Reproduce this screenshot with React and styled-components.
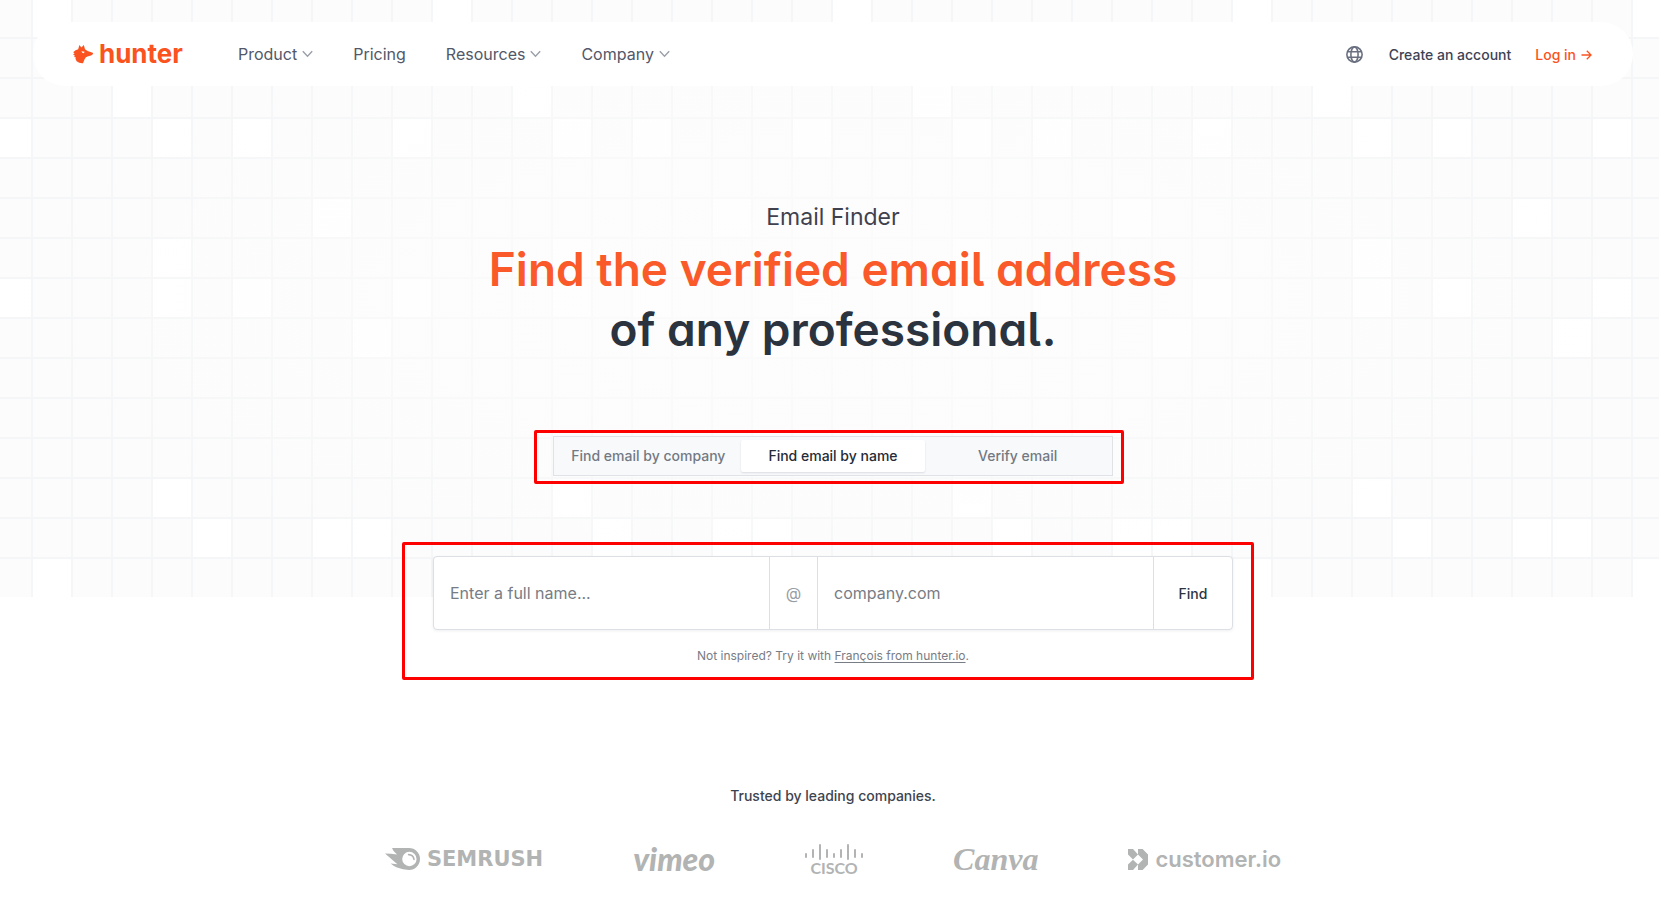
import React from 'react';
import styled, {createGlobalStyle} from 'styled-components';

const navItems = [
  {label: 'Product', menu: true},
  {label: 'Pricing', menu: false},
  {label: 'Resources', menu: true},
  {label: 'Company', menu: true},
];

const tabs = ['Find email by company', 'Find email by name', 'Verify email'];

// white squares of the grid tile, as [column, row]
const lightCells = [
  [2, 1], [3, 2], [5, 2], [9, 2], [7, 4], [3, 5], [3, 6], [5, 6], [9, 6],
  [8, 7], [3, 11], [4, 12], [7, 12], [8, 12], [0, 13],
];

// bars of the bridge, as [x, top, height]
const bridgeBars = [
  [0, 9, 5], [7, 5, 9], [14, 0, 16], [21, 5, 9], [28, 9, 5],
  [35, 5, 9], [42, 0, 16], [49, 5, 9], [56, 9, 5],
];

const GridBackdrop = () => (
  <Backdrop aria-hidden="true">
    <defs>
      <pattern id="grid" x="31" y="37" width="40" height="40" patternUnits="userSpaceOnUse">
        <path d="M0 1H40M1 0V40" stroke="#f5f6f7" strokeWidth="2" />
      </pattern>
      <pattern id="cells" x="31" y="37" width="400" height="560" patternUnits="userSpaceOnUse">
        {lightCells.map(([col, row]) => (
          <rect key={`${col}-${row}`} x={col * 40 + 2} y={row * 40 + 2} width="38" height="38" fill="#fff" />
        ))}
      </pattern>
      <radialGradient id="fade" cx="50%" cy="50%" r="50%">
        <stop offset="0" stopColor="#fdfdfd" stopOpacity="0.8" />
        <stop offset="0.5" stopColor="#fdfdfd" stopOpacity="0.5" />
        <stop offset="1" stopColor="#fdfdfd" stopOpacity="0" />
      </radialGradient>
    </defs>
    <rect width="100%" height="100%" fill="#fcfcfc" />
    <rect width="100%" height="100%" fill="url(#cells)" />
    <rect width="100%" height="100%" fill="url(#grid)" />
    <rect width="100%" height="100%" fill="url(#fade)" />
  </Backdrop>
);

const Chevron = () => (
  <svg width="11" height="8" viewBox="0 0 11 8" fill="none" stroke="#9a9fa8" strokeWidth="1.4" aria-hidden="true">
    <path d="M0.8 1.2L5.5 6.2L10.2 1.2" />
  </svg>
);

const Globe = () => (
  <svg width="17" height="17" viewBox="0 0 16 16" fill="none" stroke="#6b7080" strokeWidth="1.5" aria-hidden="true">
    <circle cx="8" cy="8" r="7.2" />
    <ellipse cx="8" cy="8" rx="3.4" ry="7.2" />
    <path d="M1.2 5.4H14.8M1.2 10.6H14.8" />
  </svg>
);

const Arrow = () => (
  <svg width="11" height="10" viewBox="0 0 11 10" fill="none" stroke="currentColor" strokeWidth="1.3" aria-hidden="true">
    <path d="M0.5 5H10M5.8 0.8L10 5L5.8 9.2" />
  </svg>
);

const Wolf = () => (
  <svg width="20" height="19" viewBox="0 0 20 19" aria-hidden="true">
    <path
      fill="#fa5320"
      d="M6.4 0L8.4 2.4L10.8 0L12 4.3L14.6 6.1L19.6 7.8Q20.3 8.4 19.8 9.2L18 10.6L14.4 11.4Q12.4 12.2 11.6 14.2L10 18.2Q6.6 18.6 3.6 16.2L2.4 13.4L3 12.4L1.2 12L1.8 10.6L0 9.6L1.6 8.6L0.2 7.2Q2.4 4.6 5.2 4.2Z"
    />
    <path fill="#fff" d="M8.4 6.2L11.6 6.8L11 8.1Q9.2 8.4 8.4 6.2Z" />
  </svg>
);

const Fireball = () => (
  <svg width="35" height="22" viewBox="0 0 35 22" aria-hidden="true">
    <path
      fill="#b2b3b3"
      d="M7 0H24A11 11 0 0 1 24 22Q18 22 12 19.6Q8.6 18.2 5.6 15.6L12.4 16.2L0 5.4Q6 5.4 12 6.6Q8 3.6 7 0Z"
    />
    <circle cx="24.4" cy="11" r="7.2" fill="#fff" />
    <path d="M23.6 6.6Q28.4 6.8 29 11.4" fill="none" stroke="#b2b3b3" strokeWidth="1.6" strokeLinecap="round" />
  </svg>
);

const Bridge = () => (
  <svg width="58" height="17" viewBox="0 0 58 17" fill="#b2b3b3" aria-hidden="true">
    {bridgeBars.map(([x, y, height]) => (
      <rect key={x} x={x} y={y} width="2" height={height} rx="1" />
    ))}
  </svg>
);

const Pinwheel = () => (
  <svg width="20" height="21" viewBox="0 0 20 21" fill="#b2b3b3" aria-hidden="true">
    <path d="M0 0H5L10 5.4L5 10.4L0 5.4Z" />
    <path d="M0 21H5L10 15.6L5 10.8L0 15.6Z" />
    <path d="M10 0H14.6L20 5.4V15.6L14.6 21H10V15.6L15 10.5L10 5.4Z" />
  </svg>
);

const App = () => {
  return (
    <Page>
      <GlobalStyle />
      <GridBackdrop />
      <Header>
        <Logo href="#home">
          <Wolf />
          hunter
        </Logo>
        <Nav>
          {navItems.map(({label, menu}) => (
            <NavLink key={label} href={`#${label.toLowerCase()}`}>
              {label}
              {menu && <Chevron />}
            </NavLink>
          ))}
        </Nav>
        <Account>
          <LanguageButton aria-label="Language">
            <Globe />
          </LanguageButton>
          <AccountLink href="#signup">Create an account</AccountLink>
          <AccountLink href="#login" $accent>
            Log in
            <Arrow />
          </AccountLink>
        </Account>
      </Header>
      <Main>
        <Title>
          <Kicker>Email Finder</Kicker>
          <Accent>Find the verified email address</Accent>
          <br />
          of any professional.
        </Title>
        <TabArea>
          <Tabs role="tablist">
            {tabs.map((tab, i) => (
              <Tab key={tab} role="tab" aria-selected={i === 1} $active={i === 1}>{tab}</Tab>
            ))}
          </Tabs>
          <TabOutline />
        </TabArea>
        <SearchArea>
          <SearchForm onSubmit={(e) => e.preventDefault()}>
            <Field aria-label="Full name" placeholder="Enter a full name..." />
            <At>@</At>
            <Field aria-label="Domain" placeholder="company.com" />
            <FindButton>Find</FindButton>
          </SearchForm>
          <Hint>
            Not inspired? Try it with <a href="#example">François from hunter.io</a>.
          </Hint>
          <SearchOutline />
        </SearchArea>
        <Trusted>Trusted by leading companies.</Trusted>
        <Brands>
          <Brand>
            <Fireball />
            <Semrush>SEMRUSH</Semrush>
          </Brand>
          <Brand>
            <Vimeo>vimeo</Vimeo>
          </Brand>
          <Brand $stacked>
            <Bridge />
            <Cisco>CISCO</Cisco>
          </Brand>
          <Brand>
            <Canva>Canva</Canva>
          </Brand>
          <Brand>
            <Pinwheel />
            <CustomerIo>customer.io</CustomerIo>
          </Brand>
        </Brands>
      </Main>
    </Page>
  );
};

const GlobalStyle = createGlobalStyle`
  * {
    box-sizing: border-box;
  }
  body {
    margin: 0;
    background: #fff;
    font-family: Inter, 'Liberation Sans', sans-serif;
    color: #2c343f;
  }
  a {
    color: inherit;
    text-decoration: none;
  }
  button, input {
    font-family: inherit;
    margin: 0;
    border: 0;
    background: none;
  }
`

const Page = styled.div`
  position: relative;
  padding: 22px 26px 24px 33px;
`

const Backdrop = styled.svg`
  position: absolute;
  top: 0;
  left: 0;
  z-index: -1;
  width: 100%;
  height: 597px;
`

const Header = styled.header`
  display: flex;
  align-items: center;
  max-width: 1600px;
  height: 64px;
  margin: 0 auto;
  padding: 0 41px 0 40px;
  border-radius: 32px;
  background: #fff;
`

const Logo = styled.a`
  display: flex;
  align-items: center;
  gap: 6px;
  width: 165px;
  font-size: 26px;
  font-weight: 700;
  line-height: 32px;
  color: #fa5320;
`

const Nav = styled.nav`
  display: flex;
  gap: 40px;
`

const NavLink = styled.a`
  display: flex;
  align-items: center;
  gap: 5px;
  font-size: 16px;
  line-height: 24px;
  color: #525868;
`

const Account = styled.div`
  display: flex;
  align-items: center;
  gap: 24px;
  margin-left: auto;
`

const LanguageButton = styled.button`
  display: flex;
  padding: 0 2px 0 0;
`

const AccountLink = styled.a`
  display: flex;
  align-items: center;
  gap: 5px;
  padding-top: 1px;
  font-size: 14px;
  font-weight: 500;
  line-height: 20px;
  color: ${(props) => (props.$accent ? '#fa5320' : '#3d4354')};
`

const Main = styled.main`
  display: flex;
  flex-direction: column;
  align-items: center;
  padding-top: 116px;
`

const Title = styled.h1`
  margin: 0;
  font-size: 46px;
  font-weight: 600;
  line-height: 60px;
  font-feature-settings: 'cv11', 'cv05';
  text-align: center;
  color: #2b333e;
`

const Kicker = styled.span`
  display: block;
  margin-bottom: 7px;
  font-size: 23px;
  font-weight: 400;
  line-height: 30px;
  font-feature-settings: normal;
  color: #40414f;
`

const Accent = styled.span`
  color: #fa5a2a;
`

const TabArea = styled.div`
  position: relative;
  width: 100%;
  max-width: 560px;
  margin-top: 77px;
`

const Tabs = styled.div`
  display: grid;
  grid-template-columns: repeat(3, 1fr);
  height: 40px;
  padding: 3px 2px;
  border: 1px solid #dfe2e6;
  background: #f8f9fb;
`

const Tab = styled.button`
  padding: 0;
  border-radius: 2px;
  font-size: 14px;
  font-weight: 500;
  line-height: 20px;
  color: ${(props) => (props.$active ? '#252b36' : '#737983')};
  background: ${(props) => (props.$active ? '#fff' : 'transparent')};
  box-shadow: ${(props) => (props.$active ? '0 1px 2px rgba(40, 50, 70, 0.14)' : 'none')};
`

// red marker frames drawn over the two areas
const Outline = styled.div`
  position: absolute;
  border: 3px solid #fd0000;
  border-radius: 2px;
  pointer-events: none;
`

const TabOutline = styled(Outline)`
  inset: -6px -11px -8px -19px;
`

const SearchArea = styled.div`
  position: relative;
  width: 100%;
  max-width: 800px;
  margin-top: 80px;
`

const SearchOutline = styled(Outline)`
  inset: -14px -21px -15px -31px;
`

const SearchForm = styled.form`
  display: flex;
  height: 74px;
  border: 1px solid #dcdfe4;
  border-radius: 4px;
  background: #fff;
  box-shadow: 0 1px 3px rgba(40, 50, 70, 0.08);
  > * + * {
    border-left: 1px solid #dcdfe4;
  }
`

const Field = styled.input`
  flex: 1;
  min-width: 0;
  padding: 0 16px;
  font-size: 16px;
  line-height: 24px;
  &::placeholder {
    color: #777c85;
    opacity: 1;
  }
`

const At = styled.span`
  display: flex;
  align-items: center;
  justify-content: center;
  width: 48px;
  font-size: 16px;
  color: #989da5;
`

const FindButton = styled.button`
  width: 79px;
  padding: 0;
  font-size: 14px;
  font-weight: 500;
  color: #2c343f;
`

const Hint = styled.p`
  margin: 17px 0 0;
  font-size: 12px;
  line-height: 18px;
  text-align: center;
  color: #777c85;
  a {
    text-decoration: underline;
    text-underline-offset: 2px;
  }
`

const Trusted = styled.p`
  margin: 121px 0 0;
  font-size: 14px;
  font-weight: 500;
  line-height: 20px;
  color: #3d4450;
`

const Brands = styled.div`
  display: flex;
  flex-wrap: wrap;
  align-items: center;
  justify-content: center;
  gap: 16px 90px;
  margin-top: 37px;
  color: #b2b3b3;
`

const Brand = styled.div`
  display: flex;
  flex-direction: ${(props) => (props.$stacked ? 'column' : 'row')};
  align-items: center;
  gap: ${(props) => (props.$stacked ? '1px' : '7px')};
`

const Semrush = styled.span`
  font: 700 21px/28px 'DejaVu Sans', sans-serif;
`

const Vimeo = styled.span`
  font: italic 900 32px/32px Lato, sans-serif;
`

const Cisco = styled.span`
  font: 700 16px/12px Lato, sans-serif;
`

const Canva = styled.span`
  font: italic 700 32px/32px 'Liberation Serif', serif;
`

const CustomerIo = styled.span`
  font-size: 22px;
  font-weight: 600;
  line-height: 28px;
`

export default App;
